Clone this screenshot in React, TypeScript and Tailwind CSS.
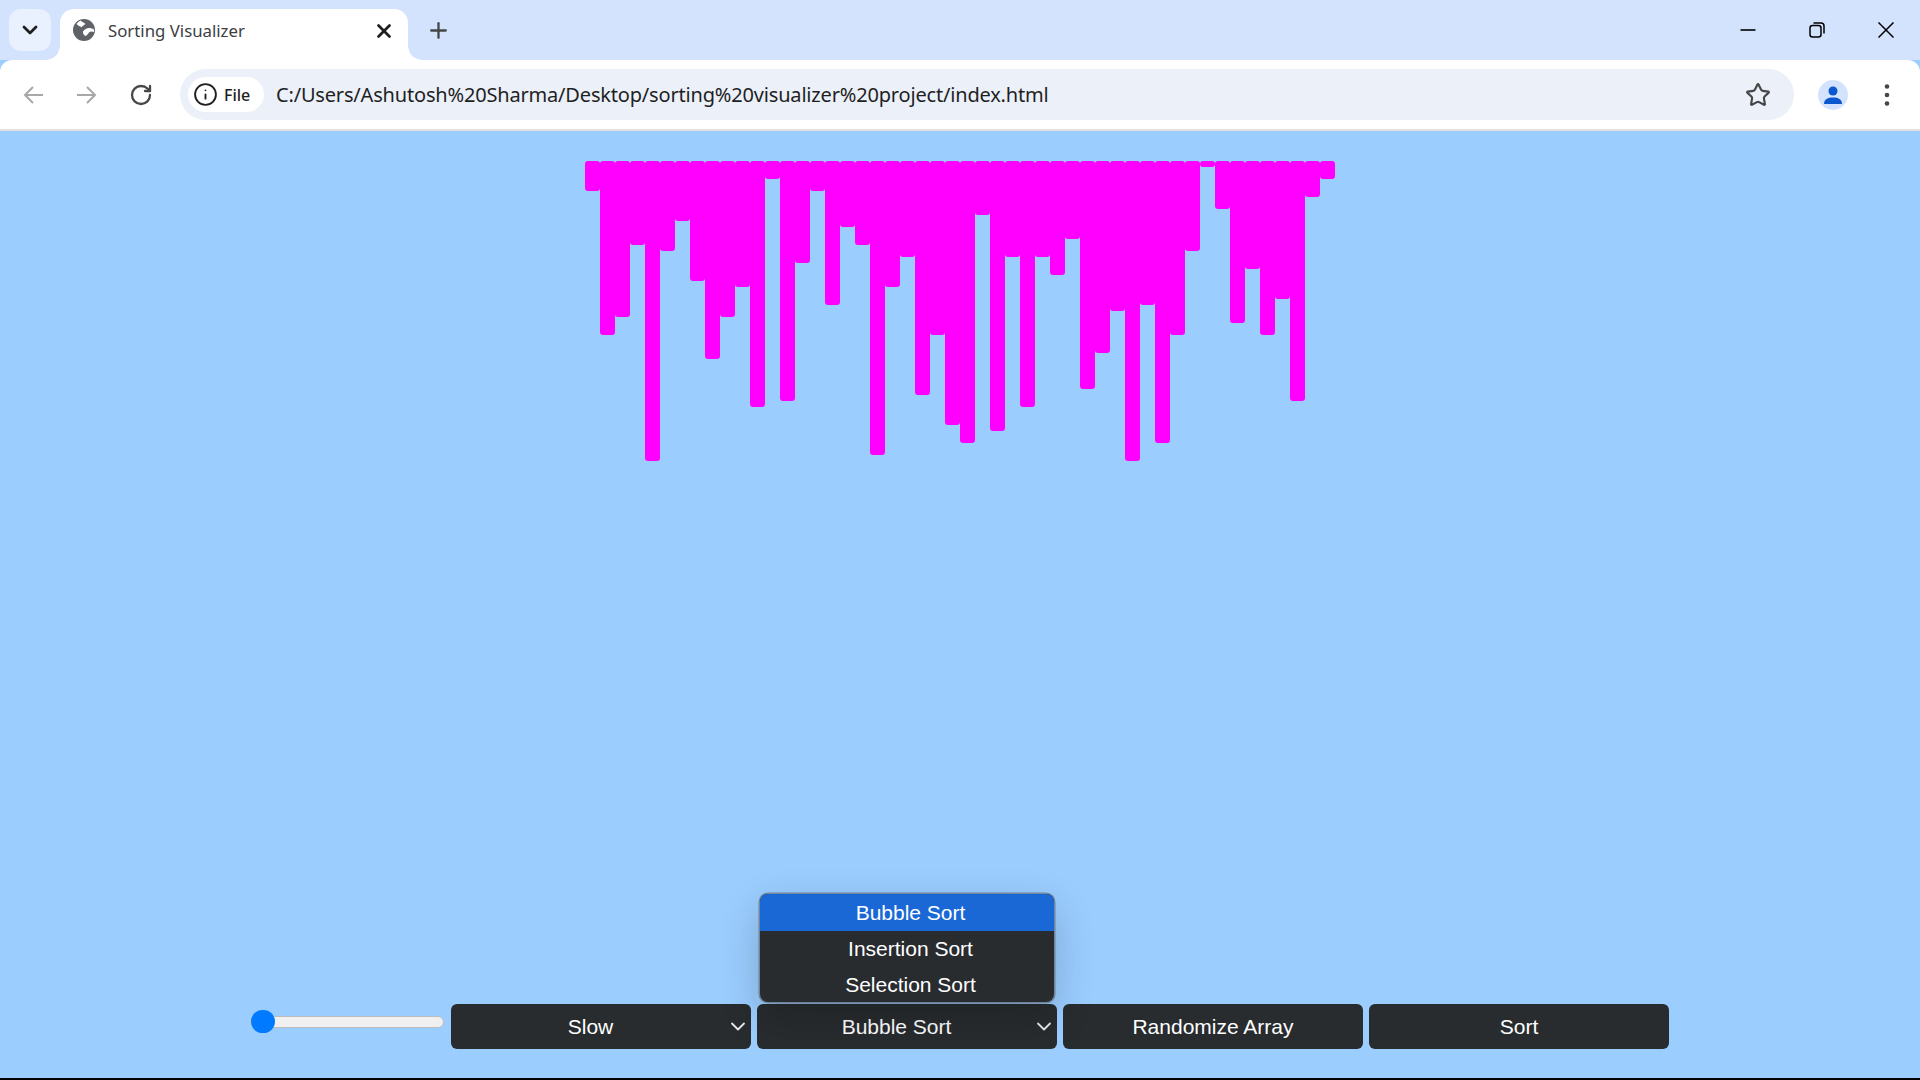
import React from "react";
import { RotateCw, Info, Star, X, Plus, ChevronDown } from "lucide-react";

const heights = [30,174,156,84,300,90,60,120,198,156,126,246,18,240,102,30,144,66,84,294,126,96,234,174,264,282,54,270,96,246,96,114,78,228,192,150,300,144,282,174,90,6,48,162,108,174,138,240,36,18];

function Select({ label }: { label: string }) {
  return (
    <div className="relative flex h-[45px] w-[300px] items-center justify-center rounded-[6px] bg-[#282c2f] pr-[21px] text-[21px] text-white">
      {label}
      <svg viewBox="0 0 16 16" className="absolute right-[5px] top-[15px] h-[16px] w-[16px]" fill="none" stroke="#e8e8e8" strokeWidth="1.8" strokeLinecap="round" strokeLinejoin="round"><path d="M2 4.500l6 6 6-6" /></svg>
    </div>
  );
}

export default function App() {
  return (
    <div className="flex h-screen w-full flex-col overflow-hidden bg-[#9bcdff] font-['Liberation_Sans',Arial,sans-serif]">
      {/* browser tabs */}
      <div className="flex h-[60px] shrink-0 items-end bg-[#d3e3fd] pl-[9px]">
        <div className="mb-[9px] flex h-[42px] w-[42px] items-center justify-center rounded-[12px] bg-[#e9f0fe]">
          <ChevronDown size={24} strokeWidth={2.8} color="#1f1f1f" />
        </div>
        <div className="relative ml-[9px] flex h-[51px] w-[348px] items-start rounded-t-[14px] bg-white pl-[13px] pt-[10px]">
          <div className="absolute bottom-0 left-[-14px] h-[14px] w-[14px] bg-[radial-gradient(circle_at_0_0,transparent_13.500px,white_14px)]" />
          <div className="absolute bottom-0 right-[-14px] h-[14px] w-[14px] bg-[radial-gradient(circle_at_100%_0,transparent_13.500px,white_14px)]" />
          <svg viewBox="0 0 22 22" className="h-[22px] w-[22px] shrink-0">
            <circle cx="11" cy="11" r="11" fill="#5f6368" />
            <path d="M7.500 1.500c1.500 1.500 3.500 1.800 5 3.500-1.500 1-3 1.800-3.800 3.200C7 7.500 5 6.500 3.500 5 4.500 3.500 5.800 2.300 7.500 1.500zM10 12.500c1.500-2.500 4-3.200 6-3.500 1.500 0 3.500.5 5 1.500.1 1 .1 1.500 0 2.500-1.500-.5-3.500-.8-5 .5-1 1-2 3-3.500 3.500-1.500-.5-3-2.500-2.500-4.500z" fill="#ffffff" />
          </svg>
          <span className="ml-[13px] mt-[1px] whitespace-nowrap font-['Noto_Sans',sans-serif] text-[16.800px] leading-[22px] text-[#3c4043]">Sorting Visualizer</span>
          <X size={22} strokeWidth={3} color="#1f1f1f" className="ml-auto mr-[13px] mt-[1px] shrink-0" />
        </div>
        <Plus size={25} strokeWidth={2.2} color="#444746" className="mb-[17px] ml-[18px]" />
        <div className="flex-1" />
        <div className="mb-[22px] mr-[26px] flex items-center gap-[53px]">
          <svg viewBox="0 0 16 16" className="h-[16px] w-[16px]" fill="none" stroke="#000" strokeWidth="1.600"><path d="M0.500 8h15" /></svg>
          <svg viewBox="0 0 16 16" className="h-[16px] w-[16px]" fill="none" stroke="#000" strokeWidth="1.500"><rect x="1" y="3.500" width="11" height="11.500" rx="2.500" /><path d="M4.500 1h7.500a3 3 0 0 1 3 3v7.500" /></svg>
          <svg viewBox="0 0 16 16" className="h-[16px] w-[16px]" fill="none" stroke="#000" strokeWidth="1.500"><path d="M0.500 0.500l15 15M15.500 0.500l-15 15" /></svg>
        </div>
      </div>
      {/* toolbar */}
      <div className="flex h-[71px] shrink-0 items-center rounded-t-[12px] border-b-2 border-[#e1e1e1] bg-white pl-[23px]">
        <svg viewBox="0 0 20 20" className="h-[20px] w-[20px]" fill="none" stroke="#a8a8a8" strokeWidth="2"><path d="M20 10H2M10 2l-8 8 8 8" /></svg>
        <svg viewBox="0 0 20 20" className="ml-[34px] h-[20px] w-[20px]" fill="none" stroke="#a8a8a8" strokeWidth="2"><path d="M0 10h18M10 2l8 8-8 8" /></svg>
        <RotateCw size={24} strokeWidth={2.300} color="#474747" className="ml-[32px]" />
        <div className="ml-[27px] flex h-[51px] w-[1614px] items-center rounded-full bg-[#ebf0f9] pl-[8px]">
          <div className="flex h-[35px] w-[76px] items-center rounded-full bg-white pl-[5px]">
            <Info size={25} strokeWidth={1.800} color="#1f1f1f" />
            <span className="ml-[6px] font-['Noto_Sans',sans-serif] text-[16px] font-medium text-[#1f1f1f]">File</span>
          </div>
          <span className="ml-[12px] whitespace-nowrap font-['Noto_Sans',sans-serif] text-[20px] tracking-[-0.18px] text-[#1f1f1f]">C:/Users/Ashutosh%20Sharma/Desktop/sorting%20visualizer%20project/index.html</span>
          <div className="flex-1" />
          <Star size={26} strokeWidth={2} color="#474747" className="mr-[23px]" />
        </div>
        <div className="ml-[24px] flex h-[30px] w-[30px] items-center justify-center rounded-full bg-[#d3e3fd]">
          <svg viewBox="0 0 20 20" className="h-[20px] w-[20px]" fill="#0b57d0"><circle cx="10" cy="6" r="4.500" /><path d="M1 19c0-5 4-6.500 9-6.500s9 1.500 9 6.500z" /></svg>
        </div>
        <svg viewBox="0 0 6 22" className="ml-[36px] h-[22px] w-[6px]" fill="#474747"><circle cx="3" cy="2.500" r="2.300" /><circle cx="3" cy="11" r="2.300" /><circle cx="3" cy="19.500" r="2.300" /></svg>
      </div>
      {/* page */}
      <div className="flex min-h-0 flex-1 flex-col justify-between pb-[29px] pt-[30px]">
        <div className="mx-auto flex w-[750px] items-start">
          {heights.map((h, i) => (
            <div key={i} className="w-[15px] rounded-[3px] bg-[#ff00ff]" style={{ height: h }} />
          ))}
        </div>
        <div className="ml-[250px] flex items-center gap-[6px] text-[21px] text-white">
          <input type="range" min={0} max={100} defaultValue={0} className="mr-[1px] h-[12px] w-[194px] -translate-y-[5px] cursor-pointer appearance-none rounded-full border border-[#bdbdbd] bg-[#f0f0f0] [&::-webkit-slider-thumb]:h-[23px] [&::-webkit-slider-thumb]:w-[24px] [&::-webkit-slider-thumb]:appearance-none [&::-webkit-slider-thumb]:rounded-full [&::-webkit-slider-thumb]:bg-[#007bff]" />
          <Select label="Slow" />
          <div className="relative">
            <Select label="Bubble Sort" />
            <div className="absolute bottom-[47px] left-[3px] w-[294px] overflow-hidden rounded-[8px] bg-[#282c2f] text-center shadow-[0_0_0_1.500px_rgba(100,115,130,0.75),0_14px_40px_rgba(0,0,0,0.2)]">
              <div className="h-[37px] bg-[#1a68d6] pl-[7px] pt-[1px] leading-[36px]">Bubble Sort</div>
              <div className="h-[36px] pl-[7px] leading-[36px]">Insertion Sort</div>
              <div className="h-[35px] pl-[7px] leading-[35px]">Selection Sort</div>
            </div>
          </div>
          <button className="h-[45px] w-[300px] rounded-[6px] bg-[#282c2f]">Randomize Array</button>
          <button className="h-[45px] w-[300px] rounded-[6px] bg-[#282c2f]">Sort</button>
        </div>
      </div>
      <div className="h-[2px] shrink-0 bg-black" />
    </div>
  );
}
